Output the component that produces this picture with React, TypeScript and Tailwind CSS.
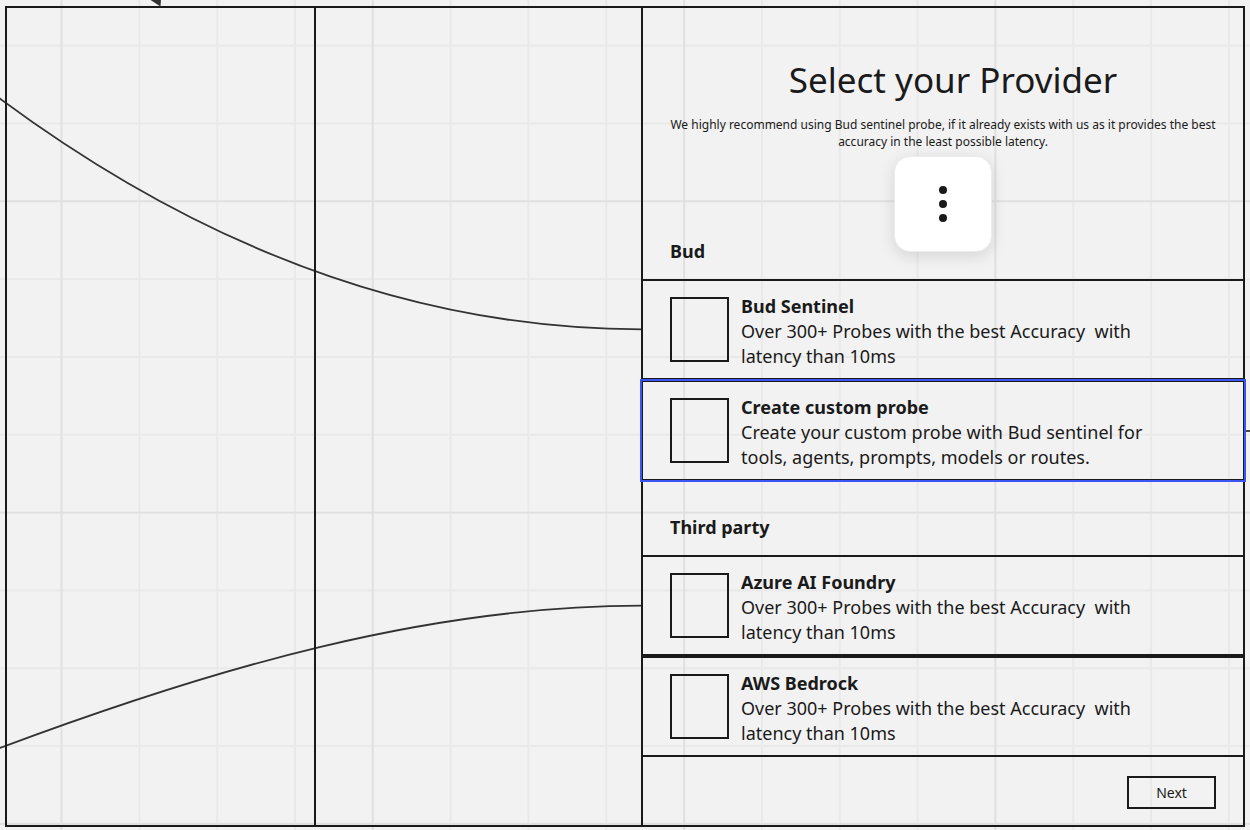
import { useState } from "react";

type Provider = { id: string; name: string; description: string };
type Group = { title: string; providers: Provider[] };

const probes = "Over 300+ Probes with the best Accuracy  with\nlatency than 10ms";

const groups: Group[] = [
  {
    title: "Bud",
    providers: [
      { id: "bud-sentinel", name: "Bud Sentinel", description: probes },
      {
        id: "custom-probe",
        name: "Create custom probe",
        description:
          "Create your custom probe with Bud sentinel for\ntools, agents, prompts, models or routes.",
      },
    ],
  },
  {
    title: "Third party",
    providers: [
      { id: "azure", name: "Azure AI Foundry", description: probes },
      { id: "aws", name: "AWS Bedrock", description: probes },
    ],
  },
];

function CanvasGrid() {
  return (
    <svg className="absolute inset-0 h-full w-full" aria-hidden="true">
      <defs>
        <pattern id="grid" x="61.5" y="201.3" width="311.3" height="311.3" patternUnits="userSpaceOnUse">
          <path
            d="M77.8 0V311.3M155.7 0V311.3M233.5 0V311.3M0 77.8H311.3M0 155.7H311.3M0 233.5H311.3"
            stroke="#e9e9e9"
            strokeWidth="2"
          />
          <path d="M0 0V311.3M311.3 0V311.3M0 0H311.3M0 311.3H311.3" stroke="#e0e0e0" strokeWidth="2" />
        </pattern>
      </defs>
      <rect width="100%" height="100%" fill="url(#grid)" />
    </svg>
  );
}

function Connectors() {
  return (
    <svg
      className="pointer-events-none absolute top-0 left-0"
      width="1250"
      height="830"
      viewBox="0 0 1250 830"
      fill="none"
      stroke="#333333"
      strokeWidth="1.8"
      aria-hidden="true"
    >
      <path d="M-1 98L0 98.6C214 257 427 329.3 642 329.3" />
      <path d="M-1 748.4L0 748C214 668 427 605.7 642 605.7" />
      <path d="M1246 431H1250" />
      <path d="M149 -1L160.500 6.500L161 -1Z" fill="#333333" stroke="none" />
    </svg>
  );
}

function ProviderRow({
  provider,
  active,
  checked,
  onToggle,
}: {
  provider: Provider;
  active: boolean;
  checked: boolean;
  onToggle: () => void;
}) {
  return (
    <label
      className={
        active
          ? "relative z-10 -mx-0.5 flex h-[101px] border-2 border-[#1a1a1a] px-[27px] outline-2 -outline-offset-1 outline-[#3d55f2]"
          : "-mx-0.5 flex h-[101px] border-2 border-[#1a1a1a] px-[27px]"
      }
    >
      <input
        type="checkbox"
        checked={checked}
        onChange={onToggle}
        className="mt-4 mr-3 h-[65px] w-[59px] shrink-0 appearance-none border-2 border-[#1a1a1a] checked:bg-[#1a1a1a]"
      />
      <span className="mt-[13px] text-lg leading-[25px] whitespace-pre">
        <strong className="block font-bold">{provider.name}</strong>
        {provider.description}
      </span>
    </label>
  );
}

export default function App() {
  const [selected, setSelected] = useState<string[]>([]);

  const toggle = (id: string) =>
    setSelected((ids) => (ids.includes(id) ? ids.filter((other) => other !== id) : [...ids, id]));

  return (
    <div className="relative flex min-h-screen overflow-hidden bg-[#f2f2f2] px-[5px] pt-1.5 pb-[3px] font-['Noto_Sans',sans-serif] text-[#1a1a1a]">
      <CanvasGrid />
      <Connectors />

      <div className="relative flex flex-1 border-2 border-r-0 border-[#1a1a1a]">
        <div className="w-[309px] border-r-2 border-[#1a1a1a]" />
      </div>

      <main className="relative flex w-[604px] shrink-0 flex-col border-2 border-[#1a1a1a]">
        <header className="mt-12 text-center">
          <h1 className="pl-5 text-[35px] leading-[48px]">Select your Provider</h1>
          <p className="mt-3 text-xs leading-[17px]">
            We highly recommend using Bud sentinel probe, if it already exists with us as it provides the best
            <br />
            accuracy in the least possible latency.
          </p>
        </header>

        <button
          type="button"
          aria-label="More options"
          className="absolute top-[148px] left-1/2 flex h-[96px] w-[98px] -translate-x-1/2 items-center justify-center rounded-2xl border border-[#ececf0] bg-white shadow-[0_4px_16px_rgba(0,0,0,0.12)]"
        >
          <svg width="8" height="36" viewBox="0 0 8 36" fill="#1a1a1a" aria-hidden="true">
            <circle cx="4" cy="4" r="4" />
            <circle cx="4" cy="18" r="4" />
            <circle cx="4" cy="32" r="4" />
          </svg>
        </button>

        <div className="mt-[55px] flex flex-col">
          {groups.map((group) => (
            <section key={group.title} className="pt-[34px]">
              <h2 className="mb-[15px] px-[27px] text-lg leading-[25px] font-bold">{group.title}</h2>
              {group.providers.map((provider) => (
                <ProviderRow
                  key={provider.id}
                  provider={provider}
                  active={provider.id === "custom-probe"}
                  checked={selected.includes(provider.id)}
                  onToggle={() => toggle(provider.id)}
                />
              ))}
            </section>
          ))}
        </div>

        <footer className="flex justify-end pt-[19px] pr-[27px]">
          <button type="button" className="h-[33px] w-[89px] border-2 border-[#1a1a1a] text-sm">
            Next
          </button>
        </footer>
      </main>
    </div>
  );
}
